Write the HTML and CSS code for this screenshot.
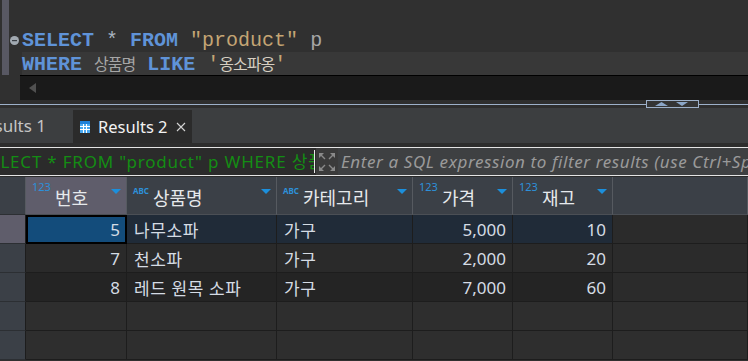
FILE: index.html
```html
<!DOCTYPE html>
<html lang="ko">
<head>
    <meta charset="UTF-8">
    <title>SQL Editor - Results</title>
    <link rel="stylesheet" href="styles.css">
</head>
<body>
<div class="editor">
    <div class="code">
        <div class="gutter">
            <div class="gutter-bar"></div>
            <div class="fold-col">
                <svg width="9" height="9" viewBox="0 0 9 9"><circle cx="4.5" cy="4.5" r="4.5" fill="#a1a9b1"/><rect x="2" y="4" width="5" height="1.2" fill="#3a3f45"/></svg>
            </div>
        </div>
        <div class="lines">
            <div class="line"><span class="kw">SELECT</span> <span class="op">*</span> <span class="kw">FROM</span> <span class="str">"product"</span> p</div>
            <div class="line current"><span class="kw">WHERE</span> <span class="ko">상품명</span> <span class="kw">LIKE</span> <span class="str">'<span class="ko">옹소파옹</span>'</span></div>
        </div>
    </div>
    <div class="hscroll"><span class="arrow-left"></span></div>
</div>

<div class="sash">
    <div class="sash-line"></div>
    <div class="sash-box">
        <svg width="51" height="6" viewBox="0 0 51 6"><path d="M8 5L14.5 1L21 5Z M29 1L41 1L35 5Z" fill="#8ba6c8"/></svg>
    </div>
    <div class="sash-line end"></div>
</div>

<div class="tabs">
    <div class="tab tab-inactive">Results 1</div>
    <div class="tab tab-active">
        <svg class="tab-icon" width="10" height="12" viewBox="0 0 10 12">
            <rect width="10" height="12" fill="#4aa8f0"/>
            <rect width="10" height="3" fill="#1f80d8"/>
            <path d="M3.5 3V12M6.5 3V12M0 5.5H10M0 8.5H10" stroke="#ffffff" stroke-width="1"/>
        </svg>
        <span class="tab-label">Results 2</span>
        <svg class="tab-close" width="10" height="10" viewBox="0 0 10 10"><path d="M1 1L9 9M9 1L1 9" stroke="#d4d4d4" stroke-width="1.1"/></svg>
    </div>
</div>
<div class="tabs-gap"></div>

<div class="filter">
    <div class="filter-input"><span class="filter-text">SELECT * FROM "product" p WHERE 상품명 LIKE '%소파%'</span></div>
    <div class="caret"></div>
    <div class="expand">
        <svg width="16" height="18" viewBox="0 0 16 18">
            <path d="M0 0h5l-5 5z M16 0h-5l5 5z M0 18h5l-5-5z M16 18h-5l5-5z" fill="#8a8a8a"/>
            <path d="M2 2l4 4 M14 2l-4 4 M2 16l4-4 M14 16l-4-4" stroke="#8a8a8a" stroke-width="1.4"/>
        </svg>
    </div>
    <div class="placeholder">Enter a SQL expression to filter results (use Ctrl+Space)</div>
</div>
<div class="grid-gap"></div>

<div class="grid">
    <div class="cell rn hd"></div>
    <div class="cell hd sel"><span class="type">123</span><span class="label">번호</span><span class="drop"></span></div>
    <div class="cell hd"><span class="type abc">ABC</span><span class="label">상품명</span><span class="drop"></span></div>
    <div class="cell hd"><span class="type abc">ABC</span><span class="label">카테고리</span><span class="drop"></span></div>
    <div class="cell hd"><span class="type">123</span><span class="label">가격</span><span class="drop"></span></div>
    <div class="cell hd"><span class="type">123</span><span class="label">재고</span><span class="drop"></span></div>
    <div class="cell hd fill"></div>

    <div class="cell rn sel"></div>
    <div class="cell num r1 focus">5</div>
    <div class="cell txt r1">나무소파</div>
    <div class="cell txt r1">가구</div>
    <div class="cell num r1">5,000</div>
    <div class="cell num r1">10</div>
    <div class="cell fill-data"></div>

    <div class="cell rn"></div>
    <div class="cell num r2">7</div>
    <div class="cell txt r2">천소파</div>
    <div class="cell txt r2">가구</div>
    <div class="cell num r2">2,000</div>
    <div class="cell num r2">20</div>
    <div class="cell fill-data"></div>

    <div class="cell rn"></div>
    <div class="cell num r3">8</div>
    <div class="cell txt r3">레드 원목 소파</div>
    <div class="cell txt r3">가구</div>
    <div class="cell num r3">7,000</div>
    <div class="cell num r3">60</div>
    <div class="cell fill-data"></div>

    <div class="cell rn"></div>
    <div class="cell empty"></div>
    <div class="cell empty"></div>
    <div class="cell empty"></div>
    <div class="cell empty"></div>
    <div class="cell empty"></div>
    <div class="cell empty"></div>

    <div class="cell rn"></div>
    <div class="cell empty"></div>
    <div class="cell empty"></div>
    <div class="cell empty"></div>
    <div class="cell empty"></div>
    <div class="cell empty"></div>
    <div class="cell empty"></div>
</div>
</body>
</html>
```

FILE: styles.css
```css
body {
    margin: 0;
    width: 748px;
    height: 361px;
    overflow: hidden;
    background-color: #303030;
    font-family: "Noto Sans", "Noto Sans CJK KR", sans-serif;
}

/* editor */
.editor {
    height: 100px;
}

.code {
    display: flex;
    height: 75px;
}

.gutter {
    display: flex;
    width: 22px;
}

.gutter-bar {
    width: 7px;
    margin-left: 2px;
    background-color: #585863;
}

.fold-col {
    padding-top: 36px;
    padding-left: 1px;
}

.fold-col svg {
    display: block;
}

.lines {
    flex: 1;
    padding-top: 29px;
    font-family: "Liberation Mono", monospace;
    font-size: 20px;
    line-height: 23px;
    color: #a6a6a6;
}

.line {
    height: 23px;
    white-space: pre;
}

.line.current {
    background-color: #383838;
}

.kw {
    color: #5f93d8;
    font-weight: bold;
}

.op {
    color: #a9b4c0;
}

.str {
    color: #c4a574;
}

.ko {
    font-family: "Noto Sans CJK KR", sans-serif;
    font-size: 16px;
    letter-spacing: -1px;
}

.str .ko {
    color: #d6cfc2;
}

.hscroll {
    display: flex;
    align-items: center;
    height: 25px;
    margin-left: 20px;
    padding-left: 9px;
    box-sizing: border-box;
    background-color: #1a1a1a;
    border-top: 1px solid #000;
}

.arrow-left {
    width: 0;
    height: 0;
    border-top: 5px solid transparent;
    border-bottom: 5px solid transparent;
    border-right: 7px solid #505050;
}

/* sash */
.sash {
    display: flex;
    align-items: center;
    height: 8px;
    background-color: #2e2e2e;
}

.sash-line {
    flex: 1;
    height: 1px;
    margin-top: 1px;
    background-color: #9db0c9;
}

.sash-line.end {
    flex: 0 0 49px;
}

.sash-box {
    width: 53px;
    height: 8px;
    box-sizing: border-box;
    border: 1px solid #9db0c9;
    background-color: #343434;
}

.sash-box svg {
    display: block;
}

/* tabs */
.tabs {
    display: flex;
    height: 35px;
    background-color: #3c3e40;
}

.tab {
    display: flex;
    align-items: center;
    font-size: 17px;
    white-space: nowrap;
}

.tab-inactive {
    width: 73px;
    justify-content: flex-end;
    padding-right: 27px;
    box-sizing: border-box;
    overflow: hidden;
    color: #c4c4c4;
}

.tab-active {
    width: 119px;
    margin-top: 2px;
    padding-left: 7px;
    box-sizing: border-box;
    background-color: #2b2b2b;
    color: #f2f2f2;
}

.tab-icon {
    margin-right: 8px;
}

.tab-label {
    font-size: 16.5px;
}

.tab-close {
    margin-left: 8px;
}

.tabs-gap {
    height: 4px;
    background-color: #2d2d2d;
}

/* filter */
.filter {
    display: flex;
    height: 29px;
    box-sizing: border-box;
    border-top: 1px solid #e4e4e4;
    border-bottom: 1px solid #e4e4e4;
    background-color: #2b2b2b;
}

.filter-input {
    width: 314px;
    overflow: hidden;
    white-space: nowrap;
    font-size: 17px;
    line-height: 27px;
    letter-spacing: 0.8px;
    color: #148d14;
}

.filter-text {
    display: inline-block;
    margin-left: -20px;
}

.caret {
    width: 1px;
    height: 23px;
    margin-top: 2px;
    background-color: #e8e8e8;
}

.expand {
    display: flex;
    align-items: center;
    justify-content: center;
    width: 22px;
    margin-left: 1px;
    background-color: #3b3b3b;
}

.placeholder {
    flex: 1;
    padding-left: 3px;
    overflow: hidden;
    white-space: nowrap;
    font-size: 17px;
    font-style: italic;
    line-height: 27px;
    letter-spacing: 0.6px;
    color: #9a9a9a;
    background-color: #3e4042;
}

.grid-gap {
    height: 1px;
    background-color: #2b2b2b;
}

/* result grid */
.grid {
    display: grid;
    grid-template-columns: 26px 101px 150px 136px 100px 100px 1fr;
    grid-template-rows: 38px repeat(5, 29px);
}

.cell {
    display: flex;
    align-items: center;
    padding: 0 7px;
    box-sizing: border-box;
    overflow: hidden;
    white-space: nowrap;
    border-right: 1px solid #1d1d1d;
    border-bottom: 1px solid #1d1d1d;
    font-size: 17px;
    color: #d5dce4;
}

.txt {
    letter-spacing: 0.6px;
}

.num {
    justify-content: flex-end;
    padding-right: 6px;
}

.hd {
    align-items: flex-start;
    padding: 0 5px 0 6px;
    background-color: #3b4047;
    border-right-color: #565a60;
    border-bottom-color: #4b4f55;
}

.hd.sel,
.rn.sel {
    background-color: #5f5d6b;
}

.rn {
    padding: 0;
    background-color: #3b4047;
    border-bottom-color: #2c2f33;
}

.type {
    margin-top: 4px;
    font-size: 11px;
    line-height: 1;
    color: #2d90da;
}

.type.abc {
    margin-top: 10px;
    font-size: 8px;
    font-weight: bold;
}

.label {
    margin-left: 4px;
    margin-top: 2px;
    font-size: 18px;
    line-height: 38px;
    color: #e6e9ec;
}

.drop {
    margin-left: auto;
    margin-top: 12px;
    width: 0;
    height: 0;
    border-left: 5px solid transparent;
    border-right: 5px solid transparent;
    border-top: 5px solid #1c8fdc;
}

.r1 {
    background-color: #202b38;
}

.r1.focus {
    background-color: #134c7b;
    border: 2px solid #000;
    padding-right: 5px;
}

.r2 {
    background-color: #2a2a2a;
}

.r3 {
    background-color: #242424;
}

.fill-data {
    background-color: #2b2b2b;
}

.empty {
    background-color: #2e2e2e;
}
```
